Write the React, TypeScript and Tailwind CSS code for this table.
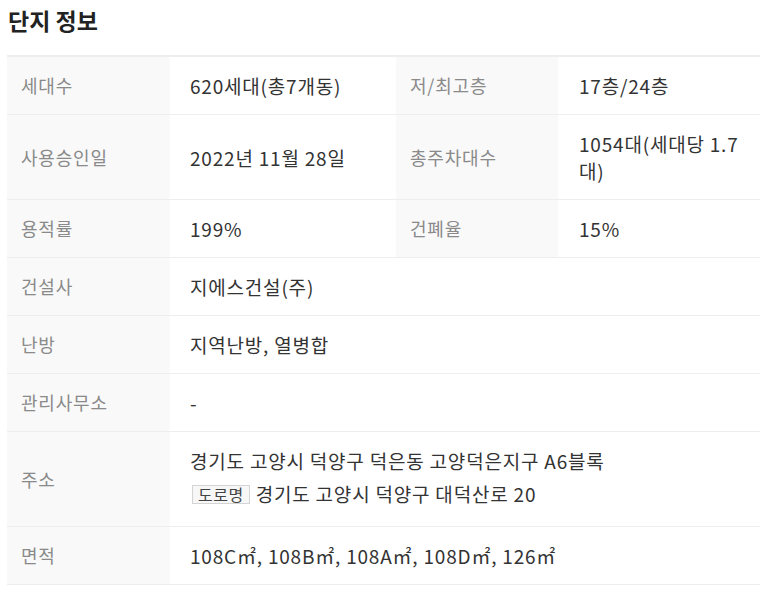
const font = { fontFamily: '"Noto Sans CJK KR", "Noto Sans", sans-serif' };

type Row = {
    label: string;
    value: React.ReactNode;
    label2?: string;
    value2?: React.ReactNode;
};

const rows: Row[] = [
    {
        label: '세대수',
        value: '620세대(총7개동)',
        label2: '저/최고층',
        value2: '17층/24층',
    },
    {
        label: '사용승인일',
        value: '2022년 11월 28일',
        label2: '총주차대수',
        value2: '1054대(세대당 1.7 대)',
    },
    { label: '용적률', value: '199%', label2: '건폐율', value2: '15%' },
    { label: '건설사', value: '지에스건설(주)' },
    { label: '난방', value: '지역난방, 열병합' },
    { label: '관리사무소', value: '-' },
    {
        label: '주소',
        value: (
            <div className="pb-[2px]">
                <div className="leading-[26px]">
                    경기도 고양시 덕양구 덕은동 고양덕은지구 A6블록
                </div>
                <div className="mt-[6px] flex items-center leading-[28px]">
                    <span className="ml-[2px] mr-[6px] inline-flex h-[19px] items-center border border-[#d4d4d4] bg-[#f7f7f7] px-[5px] text-[16px] leading-none tracking-[0.5px] text-[#444]">
                        도로명
                    </span>
                    경기도 고양시 덕양구 대덕산로 20
                </div>
            </div>
        ),
    },
    { label: '면적', value: '108C㎡, 108B㎡, 108A㎡, 108D㎡, 126㎡' },
];

export default function App() {
    return (
        <div className="bg-white pl-[7px] pr-[3px]" style={font}>
            <h2 className="pl-[1px] pt-[5px] text-[23px] font-bold leading-[30px] text-[#222]">
                단지 정보
            </h2>
            <div className="mt-[20px] border-t-2 border-[#eeeeee]">
                {rows.map((row) => (
                    <InfoRow key={row.label} {...row} />
                ))}
            </div>
        </div>
    );
}

function InfoRow({ label, value, label2, value2 }: Row) {
    return (
        <div className="flex border-b border-[#eeeeee]">
            <div className="flex w-[163px] shrink-0 items-center bg-[#f9f9f9] py-4 pl-[14px] text-[18px] leading-[25px] tracking-[0.8px] text-[#8a8a8a]">
                {label}
            </div>
            {label2 ? (
                <>
                    <div className="flex w-[226px] shrink-0 items-center py-4 pl-[20px] text-[19px] leading-[25px] tracking-[0.8px] text-[#333]">
                        {value}
                    </div>
                    <div className="flex w-[162px] shrink-0 items-center bg-[#f9f9f9] py-4 pl-[14px] text-[18px] leading-[25px] tracking-[0.8px] text-[#8a8a8a]">
                        {label2}
                    </div>
                    <div className="flex flex-1 items-center py-[15px] pl-[21px] pr-[8px] text-[19px] leading-[27px] tracking-[0.8px] text-[#333]">
                        {value2}
                    </div>
                </>
            ) : (
                <div className="flex flex-1 items-center py-4 pl-[20px] text-[19px] leading-[25px] tracking-[0.8px] text-[#333]">
                    {value}
                </div>
            )}
        </div>
    );
}
